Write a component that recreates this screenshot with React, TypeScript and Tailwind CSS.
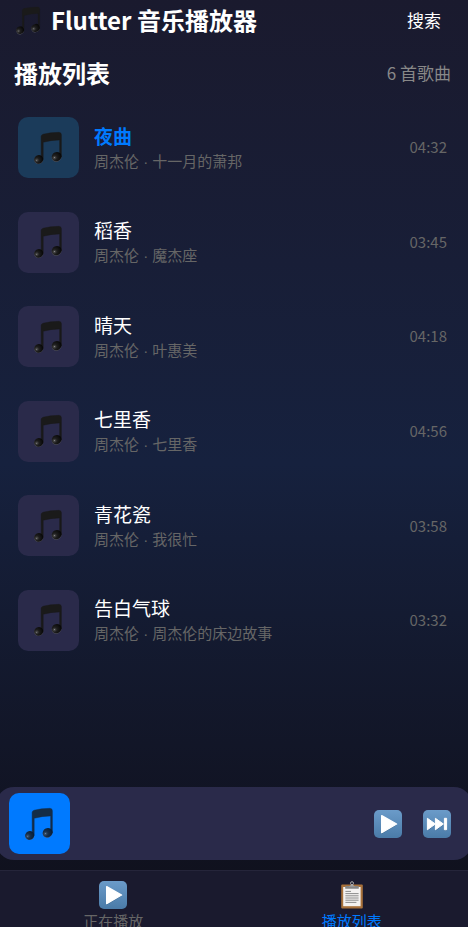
import React, { useState } from 'react';

interface Song {
    title: string;
    artist: string;
    album: string;
    duration: string;
}

const songs: Song[] = [
    { title: '夜曲', artist: '周杰伦', album: '十一月的萧邦', duration: '04:32' },
    { title: '稻香', artist: '周杰伦', album: '魔杰座', duration: '03:45' },
    { title: '晴天', artist: '周杰伦', album: '叶惠美', duration: '04:18' },
    { title: '七里香', artist: '周杰伦', album: '七里香', duration: '04:56' },
    { title: '青花瓷', artist: '周杰伦', album: '我很忙', duration: '03:58' },
    { title: '告白气球', artist: '周杰伦', album: '周杰伦的床边故事', duration: '03:32' },
];

const NoteIcon: React.FC<{ className?: string }> = ({ className }) => (
    <svg viewBox="0 0 30 36" className={className} aria-hidden="true">
        <defs>
            <radialGradient id="note-head" cx="0.26" cy="0.5" r="0.75">
                <stop offset="0" stopColor="#a0a0a0" />
                <stop offset="0.1" stopColor="#484848" />
                <stop offset="0.35" stopColor="#1e1e1e" />
                <stop offset="1" stopColor="#050505" />
            </radialGradient>
        </defs>
        <ellipse cx="4.7" cy="29.8" rx="4.5" ry="4.2" transform="rotate(-25 4.7 29.8)" fill="#55555f" />
        <ellipse cx="22.6" cy="27.2" rx="5" ry="4.4" transform="rotate(-25 22.6 27.2)" fill="#55555f" />
        <path
            d="M7.1 6.6Q7.2 4.8 9 4.2Q15.8 2.5 25 2.3Q27.4 2.3 27.4 4.8L27.4 27L25.6 27L25.6 9.9Q17 10 9.2 12.3L9.2 29.5L7.2 29.5Z"
            fill="#1a1a1a"
            stroke="#1a1a1a"
            strokeWidth="0.4"
        />
        <ellipse cx="4.7" cy="29.3" rx="4.5" ry="4.3" transform="rotate(-25 4.7 29.3)" fill="url(#note-head)" />
        <ellipse cx="22.6" cy="26.7" rx="5" ry="4.5" transform="rotate(-25 22.6 26.7)" fill="url(#note-head)" />
    </svg>
);

const PlayIcon: React.FC = () => (
    <svg viewBox="0 0 28 28" className="size-7" aria-hidden="true">
        <defs>
            <linearGradient id="key-blue" x1="0" y1="0" x2="0" y2="1">
                <stop offset="0" stopColor="#6b9bc9" />
                <stop offset="1" stopColor="#4a7ba8" />
            </linearGradient>
        </defs>
        <rect width="28" height="28" rx="5" fill="url(#key-blue)" />
        <path d="M8 6.2L22.6 14.6L8 23.4Z" fill="#3c6a94" stroke="#3c6a94" strokeLinejoin="round" />
        <path d="M7.7 5.6L22.6 14L7.7 22.6Z" fill="#fff" stroke="#fff" strokeWidth="1.4" strokeLinejoin="round" />
    </svg>
);

const NextIcon: React.FC = () => (
    <svg viewBox="0 0 28 28" className="size-7" aria-hidden="true">
        <rect width="28" height="28" rx="5" fill="url(#key-blue)" />
        <path d="M4.6 8.8L12.7 14.6L4.6 20.7ZM12.7 8.8L20.8 14.6L12.7 20.7ZM21.2 8.8H24V20.7H21.2Z" fill="#3c6a94" />
        <path d="M4.4 8.3L12.4 14L4.4 19.8ZM12.4 8.3L20.4 14L12.4 19.8ZM21.4 8.3H23.6V19.8H21.4Z" fill="#fff" stroke="#fff" strokeLinejoin="round" />
    </svg>
);

const ClipboardIcon: React.FC = () => (
    <svg viewBox="0 0 28 28" className="size-7" aria-hidden="true">
        <rect x="3.2" y="3.4" width="21.6" height="24.2" rx="1" fill="#a8713a" />
        <rect x="5.2" y="6" width="17.4" height="19.2" fill="#f3f1f0" />
        <path d="M7.4 10.4H13M7.4 12.6H20.6M7.4 14.8H20.6M7.4 17H20.6M7.4 19.2H20.6M7.4 21.4H18.4" stroke="#8c8c8c" />
        <rect x="7.2" y="5" width="13.6" height="2.8" rx="0.6" fill="#858585" />
        <path d="M10.4 5.4Q12.8 4.8 13 3.4H15Q15.2 4.8 17.6 5.4Z" fill="#a5a5a5" />
        <circle cx="14" cy="2.2" r="1.5" fill="none" stroke="#a9a9a9" />
    </svg>
);

interface SongRowProps {
    song: Song;
    active: boolean;
    onSelect: () => void;
}

const SongRow: React.FC<SongRowProps> = ({ song, active, onSelect }) => (
    <li>
        <button type="button" onClick={onSelect} className="flex w-full items-center text-left">
            <span className={`flex size-[61px] shrink-0 items-center justify-center rounded-[10px] ${active ? 'bg-[#1b3b5a]' : 'bg-[#2a2a4a]'}`}>
                <NoteIcon className="h-9 w-[30px]" />
            </span>
            <span className="ml-[15px] flex min-w-0 flex-1 flex-col">
                <span className={`truncate text-[19px] leading-7 ${active ? 'font-bold text-[#007aff]' : 'font-normal text-white'}`}>
                    {song.title}
                </span>
                <span className="truncate font-['Liberation_Sans','Noto_Sans_CJK_SC',sans-serif] text-[15px] leading-6 text-[#666666]">
                    {song.artist} · {song.album}
                </span>
            </span>
            <span className="text-[15px] text-[#666666]">{song.duration}</span>
        </button>
    </li>
);

const App: React.FC = () => {
    const [current, setCurrent] = useState(0);
    const [tab, setTab] = useState<'playing' | 'playlist'>('playlist');

    return (
        <div className="flex h-screen flex-col overflow-hidden bg-linear-to-b from-[#1a1a2e] via-[#16213e] to-[#0f0f1a] font-['Noto_Sans_CJK_SC',sans-serif]">
            <main className="flex min-h-0 flex-1 flex-col pb-[10px]">
                <header className="flex h-10 items-center justify-between pl-4 pr-[27px]">
                    <h1 className="flex items-center gap-[9px] text-2xl font-bold text-white">
                        <NoteIcon className="h-[31px] w-[26px]" />
                        Flutter 音乐播放器
                    </h1>
                    <button type="button" className="text-[17px] text-white">搜索</button>
                </header>

                <div className="flex h-[66px] items-center justify-between pl-[14px] pr-[17px]">
                    <h2 className="text-2xl font-bold text-white">播放列表</h2>
                    <span className="text-[17px] text-[#888888]">6 首歌曲</span>
                </div>

                <ul className="mb-[136px] mt-[11px] flex flex-1 flex-col justify-between pl-[18px] pr-[21px]">
                    {songs.map((song, i) => (
                        <SongRow key={song.title} song={song} active={i === current} onSelect={() => setCurrent(i)} />
                    ))}
                </ul>

                <section className="-mx-1 flex items-center rounded-[18px] bg-[#2a2a4a] py-[6px] pl-[13px] pr-[21px]">
                    <span className="flex size-[61px] items-center justify-center rounded-[10px] bg-[#007aff]">
                        <NoteIcon className="h-9 w-[30px] opacity-80" />
                    </span>
                    <div className="ml-auto flex items-center gap-[21px]">
                        <button type="button" aria-label="播放">
                            <PlayIcon />
                        </button>
                        <button type="button" aria-label="下一首">
                            <NextIcon />
                        </button>
                    </div>
                </section>
            </main>

            <nav className="-ml-[6px] -mr-[3px] flex h-[57px] shrink-0 items-start overflow-hidden border-t border-[#25253a] bg-[#1a1a2e] pt-[10px]">
                <button
                    type="button"
                    onClick={() => setTab('playing')}
                    className={`flex flex-1 flex-col items-center text-[15px] leading-6 ${tab === 'playing' ? 'text-[#007aff]' : 'text-[#666666]'}`}
                >
                    <PlayIcon />
                    正在播放
                </button>
                <button
                    type="button"
                    onClick={() => setTab('playlist')}
                    className={`flex flex-1 flex-col items-center text-[15px] leading-6 ${tab === 'playlist' ? 'text-[#007aff]' : 'text-[#666666]'}`}
                >
                    <ClipboardIcon />
                    播放列表
                </button>
            </nav>
        </div>
    );
};

export default App;
